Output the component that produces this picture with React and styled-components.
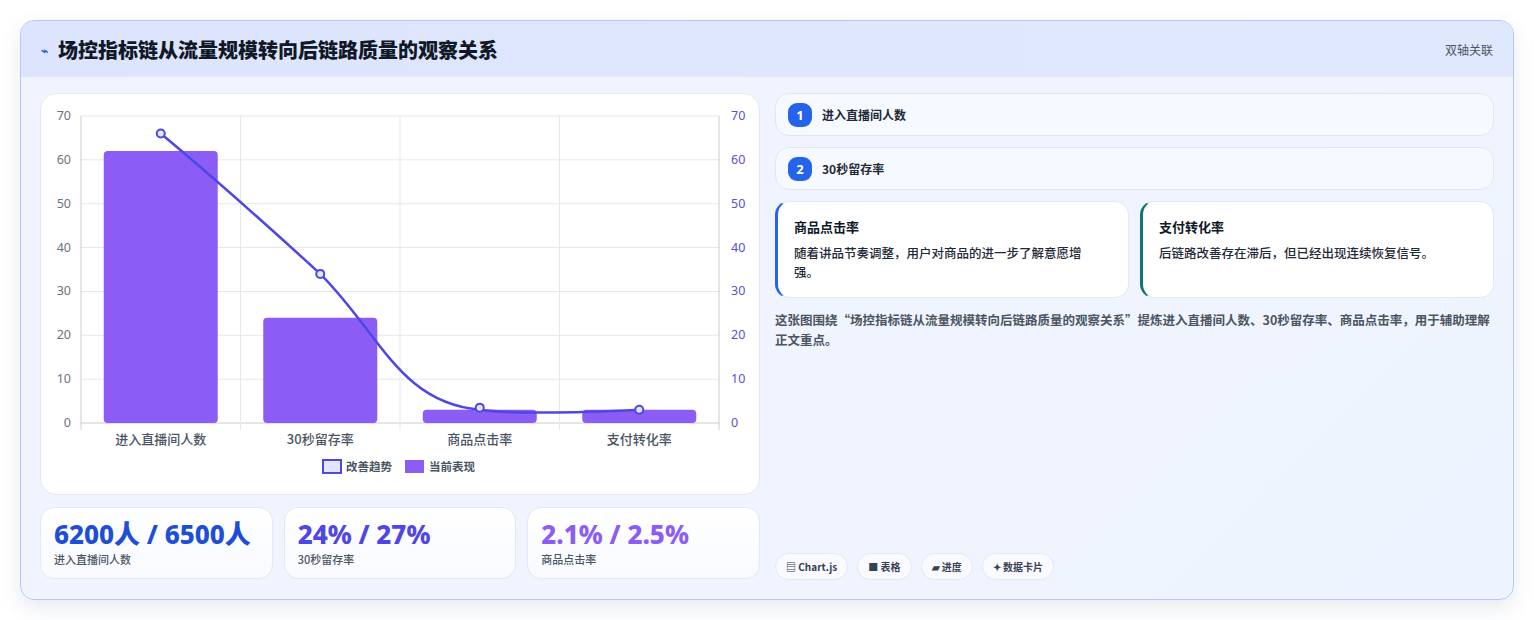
import React from "react";
import styled, { createGlobalStyle } from "styled-components";

const Global = createGlobalStyle`
  html,body{margin:0;background:#fff;font-family:"Noto Sans CJK SC","Noto Sans",sans-serif;}
`;
const Page = styled.div`padding:20px;`;
const Card = styled.div`
  border:1px solid #b9c8ee;border-radius:14px;overflow:hidden;height:578px;
  background:linear-gradient(135deg,#f1f4fe,#eef4ff);
  box-shadow:0 8px 20px rgba(60,80,140,.12);display:flex;flex-direction:column;
`;
const Header = styled.div`
  height:56px;display:flex;align-items:center;justify-content:space-between;
  padding:0 20px;background:linear-gradient(90deg,#dce5fd,#dfe8fd);
`;
const Title = styled.h1`
  margin:0;font-size:20px;font-weight:800;color:#111827;display:flex;align-items:center;gap:10px;
`;
const Bolt = styled.span`color:#2563eb;font-size:12px;`;
const Tag = styled.span`font-size:12px;color:#4b5563;`;
const Body = styled.div`
  flex:1;display:grid;grid-template-columns:720px 1fr;gap:15px;padding:16px 19px 19px 19px;
`;
const Left = styled.div`display:flex;flex-direction:column;gap:12px;`;
const ChartBox = styled.div`
  height:402px;background:#fff;border:1px solid #e2e8f5;border-radius:16px;box-sizing:border-box;
`;
const Stats = styled.div`display:grid;grid-template-columns:repeat(3,1fr);gap:11px;`;
const Stat = styled.div`
  height:72px;box-sizing:border-box;border:1px solid #e2e8f5;border-radius:14px;
  background:linear-gradient(180deg,#fff,#f8faff);padding:10px 13px;
`;
const StatVal = styled.div`font-size:26px;font-weight:800;color:${p=>p.c};line-height:32px;font-family:"Noto Sans","Noto Sans CJK SC",sans-serif;`;
const StatLbl = styled.div`font-size:11px;color:#4b5563;margin-top:1px;font-weight:500;`;
const Right = styled.div`display:flex;flex-direction:column;`;
const Step = styled.div`
  height:43px;box-sizing:border-box;border:1px solid #dfe7f7;border-radius:14px;background:#f6f9ff;
  display:flex;align-items:center;gap:10px;padding:0 12px;margin-bottom:11px;
  font-size:12px;font-weight:700;color:#1f2937;
`;
const Num = styled.span`
  width:24px;height:24px;border-radius:9px;background:#2563eb;color:#fff;font-size:13px;
  display:flex;align-items:center;justify-content:center;font-weight:700;font-family:"Noto Sans",sans-serif;
`;
const Notes = styled.div`display:grid;grid-template-columns:1fr 1fr;gap:11px;`;
const Note = styled.div`
  height:97px;box-sizing:border-box;background:#fff;border-radius:14px;border:1px solid #e2e8f5;
  border-left:3px solid ${p=>p.c};padding:15px 30px 15px 16px;
`;
const NoteT = styled.div`font-size:13px;font-weight:700;color:#111827;margin-bottom:7px;`;
const NoteD = styled.div`font-size:12.5px;color:#1f2937;line-height:19px;font-weight:500;`;
const Desc = styled.p`margin:12px 0 0;font-size:12.5px;line-height:20px;color:#4b5563;font-weight:600;`;
const Chips = styled.div`margin-top:auto;display:flex;gap:9px;`;
const Chip = styled.span`
  height:27px;box-sizing:border-box;padding:0 10px;border:1px solid #e2e8f5;border-radius:14px;background:#f8faff;
  display:flex;align-items:center;gap:4px;font-size:10px;font-weight:700;color:#374151;
`;

const X0=40,X1=678,Y0=22,Y1=329;
const yv=v=>Y1-(v/70)*(Y1-Y0);
const cats=["进入直播间人数","30秒留存率","商品点击率","支付转化率"];
const bars=[62,24,3,3];
const line=[66,34,3.5,3];
const cx=i=>X0+(i+0.5)*(X1-X0)/4;

function Chart(){
  const pts=line.map((v,i)=>[cx(i),yv(v)]);
  const d=`M${pts[0][0]},${pts[0][1]} C${pts[0][0]+60},${pts[0][1]+50} ${pts[1][0]-60},${pts[1][1]-55} ${pts[1][0]},${pts[1][1]} C${pts[1][0]+60},${pts[1][1]+60} ${pts[2][0]-80},${pts[2][1]-5} ${pts[2][0]},${pts[2][1]+2} C${pts[2][0]+40},${pts[2][1]+7} ${pts[3][0]-60},${pts[3][1]+3} ${pts[3][0]},${pts[3][1]}`;
  return (
    <svg width="718" height="400" style={{display:"block"}}>
      {[0,1,2,3,4,5,6,7].map(k=>{const y=yv(k*10);return(
        <g key={k}>
          <line x1={X0} x2={X1} y1={y} y2={y} stroke={k===0?"#c8ccd6":"#e5e7eb"}/>
          <text x={X0-10} y={y+4} fontSize="12.5" fill="#6b7280" textAnchor="end" fontFamily="Noto Sans">{k*10}</text>
          <text x={X1+12} y={y+4} fontSize="12.5" fill="#5b4fd6" fontFamily="Noto Sans">{k*10}</text>
        </g>)})}
      {[0,1,2,3,4].map(k=><line key={k} x1={X0+k*(X1-X0)/4} x2={X0+k*(X1-X0)/4} y1={Y0} y2={Y1+7} stroke={k===0||k===4?"#c8ccd6":"#e5e7eb"}/>)}
      {bars.map((v,i)=><rect key={i} x={cx(i)-57} y={yv(v)} width="114" height={Y1-yv(v)} rx="4" fill="#8b5cf6"/>)}
      <path d={d} fill="none" stroke="#4f46e5" strokeWidth="2.5"/>
      {pts.map((p,i)=><circle key={i} cx={p[0]} cy={p[1]} r="4" fill="#e0e7ff" stroke="#4f46e5" strokeWidth="2"/>)}
      {cats.map((c,i)=><text key={i} x={cx(i)} y={350} fontSize="13" fill="#4b5563" textAnchor="middle" fontWeight="500">{c}</text>)}
      <rect x="282" y="366" width="18" height="13" fill="#e0e7ff" stroke="#4f46e5" strokeWidth="2"/>
      <text x="305" y="377" fontSize="11.5" fill="#4b5563" fontWeight="600">改善趋势</text>
      <rect x="364" y="366" width="19" height="13" fill="#8b5cf6"/>
      <text x="388" y="377" fontSize="11.5" fill="#4b5563" fontWeight="600">当前表现</text>
    </svg>
  );
}

export default function App(){
  return (<Page><Global/>
    <Card>
      <Header><Title><Bolt>⌁</Bolt>场控指标链从流量规模转向后链路质量的观察关系</Title><Tag>双轴关联</Tag></Header>
      <Body>
        <Left>
          <ChartBox><Chart/></ChartBox>
          <Stats>
            <Stat><StatVal c="#1d4ed8">6200人 / 6500人</StatVal><StatLbl>进入直播间人数</StatLbl></Stat>
            <Stat><StatVal c="#4f46e5">24% / 27%</StatVal><StatLbl>30秒留存率</StatLbl></Stat>
            <Stat><StatVal c="#8b5cf6">2.1% / 2.5%</StatVal><StatLbl>商品点击率</StatLbl></Stat>
          </Stats>
        </Left>
        <Right>
          <Step><Num>1</Num>进入直播间人数</Step>
          <Step><Num>2</Num>30秒留存率</Step>
          <Notes>
            <Note c="#2563eb"><NoteT>商品点击率</NoteT><NoteD>随着讲品节奏调整，用户对商品的进一步了解意愿增强。</NoteD></Note>
            <Note c="#0f766e"><NoteT>支付转化率</NoteT><NoteD>后链路改善存在滞后，但已经出现连续恢复信号。</NoteD></Note>
          </Notes>
          <Desc>这张图围绕“场控指标链从流量规模转向后链路质量的观察关系”提炼进入直播间人数、30秒留存率、商品点击率，用于辅助理解正文重点。</Desc>
          <Chips><Chip>▤ Chart.js</Chip><Chip>■ 表格</Chip><Chip>▰ 进度</Chip><Chip>✦ 数据卡片</Chip></Chips>
        </Right>
      </Body>
    </Card>
  </Page>);
}
